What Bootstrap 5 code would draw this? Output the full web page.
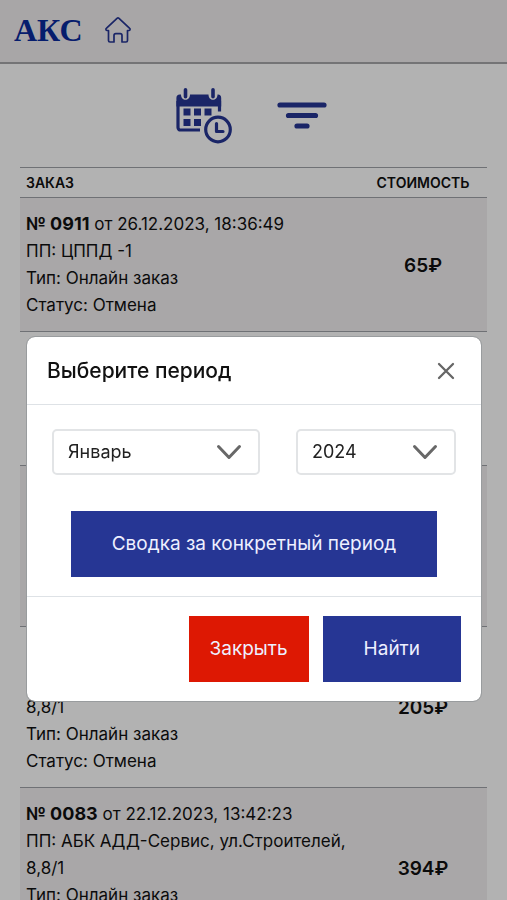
<!DOCTYPE html>
<html lang="ru">
<head>
<meta charset="utf-8">
<meta name="viewport" content="width=device-width, initial-scale=1">
<title>АКС — Заказы</title>
<link href="https://cdn.jsdelivr.net/npm/bootstrap@5.3.0/dist/css/bootstrap.min.css" rel="stylesheet">
<style>
  :root { --navy: #263694; --line: #dee2e6; }
  body { font-family: Inter, "Noto Sans", sans-serif; font-size: 17px; line-height: 27px; color: #111; }
  .top-bar { height: 64px; padding: 0 14px 3px; background: #f1eeef; border-bottom: 2px solid #a6a6a9; gap: 21px; }
  .brand-name { font-family: "Liberation Serif", serif; font-weight: 700; font-size: 32px; line-height: 40px; color: #0a2a9c; }
  .tools { padding: 24px 4px 23px 0; gap: 44px; }
  .tools svg, .top-bar svg { display: block; }
  .orders { padding: 0 20px; }
  .order-table { --bs-table-striped-bg: #f3f0f1; --bs-table-striped-color: #111; --bs-table-color: #111; border-color: #a0a3a8; }
  .order-table th { font-size: 14px; line-height: 21px; font-weight: 600; padding: 4px 6px; border-top: 1px solid #a0a3a8; }
  .order-table td { padding: 13px 6px 12px; }
  .order-table b { font-size: 18px; line-height: 1; }
  .cost-col { width: 128px; text-align: center; }
  .order-table td.cost-col { font-size: 19px; font-weight: 600; }
  .modal-backdrop { --bs-backdrop-opacity: .3; }
  .period-modal { padding: 336px 25px 0 26px; }
  .period-modal .modal-dialog { margin: 0; max-width: none; }
  .period-modal .modal-content { border: 1px solid #999c9e; border-radius: 9px; color: #111; }
  .period-modal .modal-header { padding: 19px 20px 18px; border-color: var(--line); }
  .period-modal .modal-title { font-size: 21px; line-height: 28px; font-weight: 500; }
  .period-modal .modal-body { padding: 24px 25px 19px; }
  .selects { gap: 36px; margin-bottom: 36px; }
  .period-select { height: 46px; padding: 0 14px 2px; font-size: 18px; border: 2px solid #e2e4e6; border-radius: 5px; color: #222; background-size: 26px 26px; background-position: right 16px center;
    background-image: url("data:image/svg+xml,%3Csvg xmlns='http://www.w3.org/2000/svg' viewBox='0 0 26 26'%3E%3Cpath d='M2.5 7.5 13 18.5 23.5 7.5' fill='none' stroke='%23686868' stroke-width='3' stroke-linecap='round' stroke-linejoin='round'/%3E%3C/svg%3E"); }
  .month-box { flex: 208 1 0; }
  .year-box { flex: 160 1 0; }
  .flat-btn { --bs-btn-color: #eef0ff; --bs-btn-bg: var(--navy); --bs-btn-border-color: var(--navy); --bs-btn-hover-bg: #1e2c7c; --bs-btn-hover-color: #fff; --bs-btn-border-radius: 0; --bs-btn-font-size: 19px; --bs-btn-padding-y: 18px; --bs-btn-padding-x: 40px; line-height: 28px; }
  .close-action { --bs-btn-bg: #dd1803; --bs-btn-border-color: #dd1803; --bs-btn-hover-bg: #b81402; --bs-btn-padding-x: 20px; }
  .period-modal .modal-footer { padding: 19px 20px; gap: 14px; border-color: var(--line); }
  .period-modal .modal-footer > * { margin: 0; }
  .x-btn { padding: 5px; line-height: 0; }
</style>
</head>
<body class="modal-open overflow-hidden vh-100">

<header class="top-bar d-flex align-items-center">
  <a class="brand-name text-decoration-none" href="#">АКС</a>
  <a href="#" aria-label="Главная">
    <svg width="28" height="28" viewBox="0 0 28 28" fill="none" stroke="#263694" stroke-width="1.7" stroke-linejoin="round" stroke-linecap="round"><path d="M13 2.400 2.300 12.400a1.200 1.200 0 0 0 .8 2.100H4.500V24.500A1.500 1.500 0 0 0 6 26h4V19.500A1.800 1.800 0 0 1 11.800 17.700h4.400a1.800 1.800 0 0 1 1.800 1.800V26h4a1.500 1.500 0 0 0 1.500-1.500V14.500h1.400a1.200 1.200 0 0 0 .8-2.100L15 2.400a1.500 1.500 0 0 0-2 0Z"/></svg>
  </a>
</header>

<main>
  <div class="tools d-flex justify-content-center">
    <button type="button" class="btn p-0 border-0" aria-label="Период">
      <svg width="57" height="56" viewBox="0 0 57 56" fill="none">
        <path d="M2 13v26.500a2.500 2.500 0 0 0 2.500 2.500H24M43.500 13v10.500" stroke="#263694" stroke-width="3.200"/>
        <path d="M.4 18.500V10A3.500 3.500 0 0 1 4 6.500h1c0 7 9 7 9 0h18.500c0 7 9 7 9 0h.5a3.500 3.500 0 0 1 3.200 3.500v8.500Z" fill="#263694"/>
        <path d="M9.500 1.800v7M37 1.800v7" stroke="#263694" stroke-width="3.600" stroke-linecap="round"/>
        <path d="M7.500 20.500h7v7h-7zM18 20.500h7v7h-7zM28.500 20.500h7v7h-7zM7.500 31h7v7h-7zM18 31h7v7h-7z" fill="#263694"/>
        <circle cx="42" cy="41.500" r="12.300" stroke="#263694" stroke-width="3.200"/>
        <path d="M40.500 35.500v8h6.500" stroke="#263694" stroke-width="3.200" stroke-linecap="round" stroke-linejoin="round"/>
      </svg>
    </button>
    <button type="button" class="btn p-0 border-0" aria-label="Фильтр">
      <svg width="50" height="28" viewBox="0 0 50 28" fill="none" stroke="#263694" stroke-width="5.200" stroke-linecap="round"><path d="M3 3h44M11.500 13.500h27M20 24h10"/></svg>
    </button>
  </div>

  <div class="orders">
    <table class="table table-striped order-table mb-0">
      <thead>
        <tr><th scope="col">ЗАКАЗ</th><th scope="col" class="cost-col">СТОИМОСТЬ</th></tr>
      </thead>
      <tbody class="align-middle">
        <tr><td><b>№ 0911</b> от 26.12.2023, 18:36:49<br>ПП: ЦППД -1<br>Тип: Онлайн заказ<br>Статус: Отмена</td><td class="cost-col">65₽</td></tr>
        <tr><td><br><br><br><br></td><td class="cost-col"></td></tr>
        <tr><td><br><br><br><br><br></td><td class="cost-col"></td></tr>
        <tr><td><br><br>8,8/1<br>Тип: Онлайн заказ<br>Статус: Отмена</td><td class="cost-col">205₽</td></tr>
        <tr><td><b>№ 0083</b> от 22.12.2023, 13:42:23<br>ПП: АБК АДД-Сервис, ул.Строителей,<br>8,8/1<br>Тип: Онлайн заказ<br>Статус: Отмена</td><td class="cost-col">394₽</td></tr>
      </tbody>
    </table>
  </div>
</main>

<div class="modal-backdrop show"></div>
<div class="modal period-modal show d-block" tabindex="-1" role="dialog" aria-modal="true" aria-labelledby="periodTitle">
  <div class="modal-dialog">
    <form class="modal-content">
      <div class="modal-header">
        <h1 class="modal-title" id="periodTitle">Выберите период</h1>
        <button type="button" class="btn border-0 x-btn" data-bs-dismiss="modal" aria-label="Закрыть окно">
          <svg width="20" height="20" viewBox="0 0 20 20" fill="none" stroke="#666" stroke-width="2.300" stroke-linecap="round"><path d="m3 3 14 14M17 3 3 17"/></svg>
        </button>
      </div>
      <div class="modal-body">
        <div class="selects d-flex">
          <div class="month-box"><select class="form-select period-select" aria-label="Месяц"><option>Январь</option><option>Февраль</option><option>Март</option></select></div>
          <div class="year-box"><select class="form-select period-select" aria-label="Год"><option>2024</option><option>2023</option></select></div>
        </div>
        <div class="text-center"><button type="button" class="btn flat-btn">Сводка за конкретный период</button></div>
      </div>
      <div class="modal-footer">
        <button type="button" class="btn flat-btn close-action" data-bs-dismiss="modal">Закрыть</button>
        <button type="submit" class="btn flat-btn">Найти</button>
      </div>
    </form>
  </div>
</div>

<script src="https://cdn.jsdelivr.net/npm/bootstrap@5.3.0/dist/js/bootstrap.bundle.min.js"></script>
</body>
</html>
